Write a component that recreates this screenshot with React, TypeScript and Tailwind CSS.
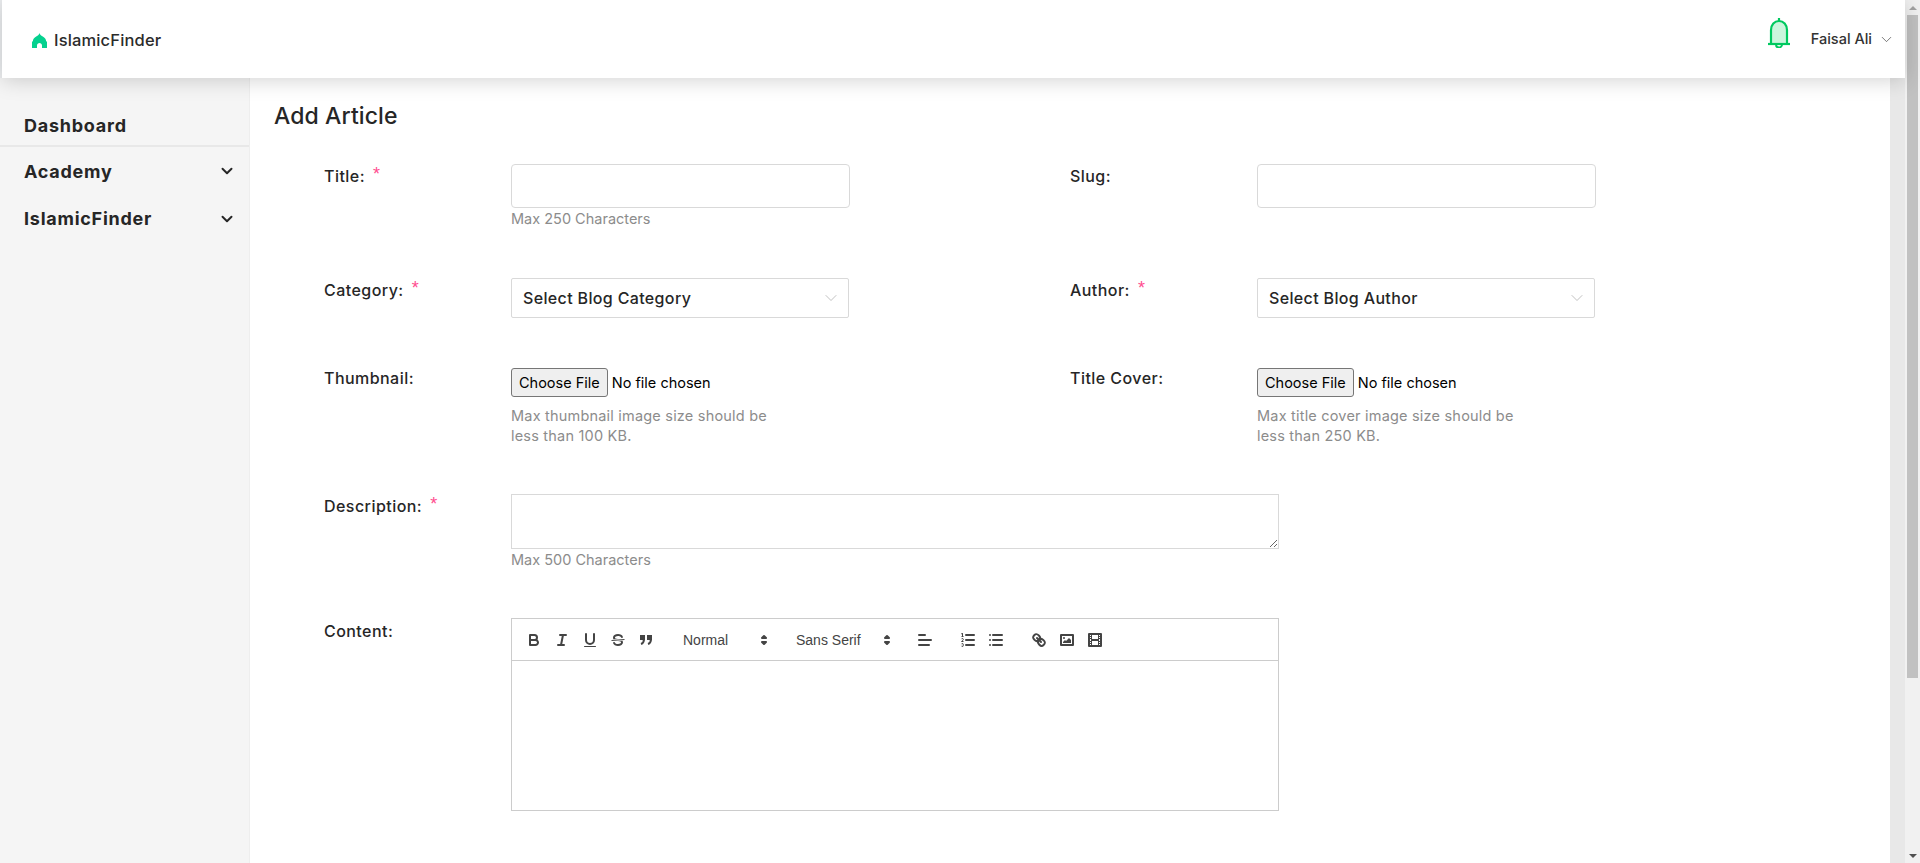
import { ReactNode } from 'react'
import { ChevronDown } from 'lucide-react'

const sans = 'font-["Inter","Open_Sans",sans-serif]'

function Label({ text, required, className = '' }: { text: string; required?: boolean; className?: string }) {
  return (
    <div className={`w-[187px] shrink-0 flex items-start text-[16px] tracking-[0.45px] leading-6 font-[450] text-[#262626] ${className}`}>
      <span>{text}:</span>
      {required && <span className="ml-[8px] -mt-[2px] text-[18px] text-[#ff4d8f] font-['Liberation_Sans',sans-serif]">*</span>}
    </div>
  )
}

function Field({ label, required, labelClass, children }: { label: string; required?: boolean; labelClass?: string; children: ReactNode }) {
  return (
    <div className="flex w-[746px] shrink-0">
      <Label text={label} required={required} className={labelClass} />
      <div>{children}</div>
    </div>
  )
}

function Hint({ children }: { children: ReactNode }) {
  return <div className="text-[14.5px] leading-5 pt-px text-[#8c8c8c]">{children}</div>
}

function SelectBox({ text }: { text: string }) {
  return (
    <div className="w-[338px] h-10 border border-[#d9d9d9] rounded-[2px] flex items-center justify-between pl-[11px] pr-[7px] text-[16px] tracking-[0.35px] font-[450] text-[#262626]">
      <span>{text}</span>
      <ChevronDown size={20} strokeWidth={1} className="text-[#b5b5b5]" />
    </div>
  )
}

function FileField() {
  return <input type="file" className="block w-[260px] h-[29px] text-[14.5px] font-normal text-black file:h-[29px] file:px-[7px] file:mr-1 file:border file:border-[#767676] file:rounded-[3px] file:bg-[#efefef]" />
}

const strokeCls = 'fill-none stroke-[#444] stroke-2 [stroke-linecap:round] [stroke-linejoin:round]'

function QlBtn({ children }: { children: ReactNode }) {
  return (
    <span className="w-7 h-6 px-[5px] py-[3px] shrink-0 block">
      <svg viewBox="0 0 18 18" className="w-[18px] h-[18px]">{children}</svg>
    </span>
  )
}

function Picker({ text, width }: { text: string; width: string }) {
  return (
    <span className={`relative h-6 shrink-0 mr-[15px] pl-2 flex items-center text-sm text-[#444] font-['Liberation_Sans',sans-serif] ${width}`}>
      {text}
      <svg viewBox="0 0 18 18" className="absolute right-0 top-[3px] w-[18px] h-[18px]">
        <polygon className={strokeCls} points="7 11 9 13 11 11 7 11" />
        <polygon className={strokeCls} points="7 7 9 5 11 7 7 7" />
      </svg>
    </span>
  )
}

function Toolbar() {
  return (
    <div className="h-[42px] p-2 flex items-center border-b border-[#ccc]">
      <QlBtn>
        <path className={strokeCls} d="M5,4H9.5A2.5,2.5,0,0,1,12,6.5v0A2.5,2.5,0,0,1,9.5,9H5A0,0,0,0,1,5,9V4A0,0,0,0,1,5,4Z" />
        <path className={strokeCls} d="M5,9h5.5A2.5,2.5,0,0,1,13,11.5v0A2.5,2.5,0,0,1,10.5,14H5a0,0,0,0,1,0,0V9A0,0,0,0,1,5,9Z" />
      </QlBtn>
      <QlBtn>
        <line className={strokeCls} x1="7" x2="13" y1="4" y2="4" />
        <line className={strokeCls} x1="5" x2="11" y1="14" y2="14" />
        <line className={strokeCls} x1="8" x2="10" y1="14" y2="4" />
      </QlBtn>
      <QlBtn>
        <path className={strokeCls} d="M5,3V9a4.012,4.012,0,0,0,4,4H9a4.012,4.012,0,0,0,4-4V3" />
        <rect className="fill-[#444]" height="1" rx=".5" ry=".5" width="12" x="3" y="15" />
      </QlBtn>
      <QlBtn>
        <line className="stroke-[#444] stroke-1" x1="15.5" x2="2.5" y1="8.5" y2="9.5" />
        <path className="fill-[#444]" d="M9.007,8C6.542,7.791,6,7.519,6,6.5,6,5.792,7.283,5,9,5c1.571,0,2.765.679,2.969,1.309a1,1,0,0,0,1.9-.617C13.356,4.106,11.354,3,9,3,6.2,3,4,4.538,4,6.5a3.2,3.2,0,0,0,.5,1.843Z" />
        <path className="fill-[#444]" d="M8.984,10C11.457,10.208,12,10.479,12,11.5c0,.708-1.283,1.5-3,1.5-1.571,0-2.765-.679-2.969-1.309a1,1,0,1,0-1.9.617C4.644,13.894,6.646,15,9,15c2.8,0,5-1.538,5-3.5a3.2,3.2,0,0,0-.5-1.843Z" />
      </QlBtn>
      <span className="mr-[15px] block">
        <QlBtn>
          <rect className="fill-[#444] stroke-[#444] stroke-2" height="3" width="3" x="4" y="5" />
          <rect className="fill-[#444] stroke-[#444] stroke-2" height="3" width="3" x="11" y="5" />
          <path className="fill-none stroke-[#444] stroke-2" d="M7,8c0,4.031-3,5-3,5" />
          <path className="fill-none stroke-[#444] stroke-2" d="M14,8c0,4.031-3,5-3,5" />
        </QlBtn>
      </span>
      <Picker text="Normal" width="w-[98px]" />
      <Picker text="Sans Serif" width="w-[108px]" />
      <span className="mr-[15px] block">
        <QlBtn>
          <line className={strokeCls} x1="3" x2="15" y1="9" y2="9" />
          <line className={strokeCls} x1="3" x2="13" y1="14" y2="14" />
          <line className={strokeCls} x1="3" x2="9" y1="4" y2="4" />
        </QlBtn>
      </span>
      <QlBtn>
        <line className={strokeCls} x1="7" x2="15" y1="4" y2="4" />
        <line className={strokeCls} x1="7" x2="15" y1="9" y2="9" />
        <line className={strokeCls} x1="7" x2="15" y1="14" y2="14" />
        <line className="stroke-[#444] stroke-1" x1="2.5" x2="4.5" y1="5.5" y2="5.5" />
        <path className="fill-[#444]" d="M3.5,6A0.5,0.5,0,0,1,3,5.5V3.085l-0.276.138A0.5,0.5,0,0,1,2.053,3c-0.124-.247-0.023-0.324.224-0.447l1-.5A0.5,0.5,0,0,1,4,2.5v3A0.5,0.5,0,0,1,3.5,6Z" />
        <path className="fill-none stroke-[#444] stroke-1" d="M4.5,10.5h-2c0-.234,1.85-1.076,1.85-2.234A0.959,0.959,0,0,0,2.5,8.156" />
        <path className="fill-none stroke-[#444] stroke-1" d="M2.5,14.846a0.959,0.959,0,0,0,1.85-.109A0.7,0.7,0,0,0,3.75,14a0.688,0.688,0,0,0,.6-0.736,0.959,0.959,0,0,0-1.85-.109" />
      </QlBtn>
      <span className="mr-[15px] block">
        <QlBtn>
          <line className={strokeCls} x1="6" x2="15" y1="4" y2="4" />
          <line className={strokeCls} x1="6" x2="15" y1="9" y2="9" />
          <line className={strokeCls} x1="6" x2="15" y1="14" y2="14" />
          <line className={strokeCls} x1="3" x2="3" y1="4" y2="4" />
          <line className={strokeCls} x1="3" x2="3" y1="9" y2="9" />
          <line className={strokeCls} x1="3" x2="3" y1="14" y2="14" />
        </QlBtn>
      </span>
      <QlBtn>
        <line className={strokeCls} x1="7" x2="11" y1="7" y2="11" />
        <path className={strokeCls} d="M8.9,4.577a3.476,3.476,0,0,1,.36,4.679A3.476,3.476,0,0,1,4.577,8.9C3.185,7.5,2.035,6.4,4.217,4.217S7.5,3.185,8.9,4.577Z" />
        <path className={strokeCls} d="M13.423,9.1a3.476,3.476,0,0,0-4.679-.36,3.476,3.476,0,0,0,.36,4.679c1.392,1.392,2.5,2.542,4.679.36S14.815,10.5,13.423,9.1Z" />
      </QlBtn>
      <QlBtn>
        <rect className={strokeCls} height="10" width="12" x="3" y="4" />
        <circle className="fill-[#444]" cx="6" cy="7" r="1" />
        <polyline className="fill-[#444]" points="5 12 5 11 7 9 8 10 11 7 13 9 13 12 5 12" />
      </QlBtn>
      <QlBtn>
        <rect className={strokeCls} height="12" width="12" x="3" y="3" />
        <rect className="fill-[#444]" height="12" width="1" x="5" y="3" />
        <rect className="fill-[#444]" height="12" width="1" x="12" y="3" />
        <rect className="fill-[#444]" height="2" width="8" x="5" y="8" />
        <rect className="fill-[#444]" height="1" width="3" x="3" y="5" />
        <rect className="fill-[#444]" height="1" width="3" x="3" y="7" />
        <rect className="fill-[#444]" height="1" width="3" x="3" y="10" />
        <rect className="fill-[#444]" height="1" width="3" x="3" y="12" />
        <rect className="fill-[#444]" height="1" width="3" x="12" y="5" />
        <rect className="fill-[#444]" height="1" width="3" x="12" y="7" />
        <rect className="fill-[#444]" height="1" width="3" x="12" y="10" />
        <rect className="fill-[#444]" height="1" width="3" x="12" y="12" />
      </QlBtn>
    </div>
  )
}

// the browser's own scrollbar doesn't show in the photo, so it is drawn
function ScrollBar() {
  return (
    <div className="w-[15px] shrink-0 bg-[#f1f1f1] flex flex-col items-center">
      <div className="h-[15px] w-full flex items-center justify-center">
        <div className="w-0 h-0 border-x-[4px] border-x-transparent border-b-[4px] border-b-[#a3a3a3]" />
      </div>
      <div className="w-[11px] h-[663px] bg-[#c1c1c1]" />
      <div className="mt-auto h-[15px] w-full flex items-center justify-center">
        <div className="w-0 h-0 border-x-[4px] border-x-transparent border-t-[4px] border-t-[#505050]" />
      </div>
    </div>
  )
}

export default function App() {
  return (
    <div className={`${sans} h-[863px] overflow-hidden flex bg-[#eceef0] text-[#262626]`}>
      <div className="flex-1 min-w-0 flex flex-col">
        {/* Top bar */}
        <header className="relative z-10 ml-[2px] h-[78px] shrink-0 bg-white shadow-[0_2px_20px_rgba(0,0,0,0.18)] flex items-center pl-[30px] pr-[10px]">
          <svg viewBox="0 0 15 15" className="w-[15px] h-[15px] mr-[7px] mt-[3px]">
            <path fill="#05d18f" d="M7.5 0 C7.8 1.6 9 2.6 10.8 3.6 C12.8 4.7 14 6.2 14.2 8.5 L15 8.5 V15 H10 V12.5 C10 11 8.8 10 7.5 10 C6.2 10 5 11 5 12.5 V15 H0 V8.5 L.8 8.5 C1 6.2 2.2 4.7 4.2 3.6 C6 2.6 7.2 1.6 7.5 0 Z" />
          </svg>
          <span className="text-[16.5px] tracking-[0.15px] font-[450] text-[#2b2b2b] mt-[3px]">IslamicFinder</span>
          <div className="ml-auto flex items-center">
            <svg viewBox="0 0 22 30" className="w-[22px] h-[30px] mr-[21px] -mt-[12px]">
              <path d="M11 0.5 V3" stroke="#00c95f" strokeWidth="2.2" strokeLinecap="round" />
              <path d="M3 26 V12 C3 6.5 6.5 3 11 3 C15.5 3 19 6.5 19 12 V26 Z" fill="#cbf6dd" stroke="#00c95f" strokeWidth="2.2" />
              <line x1="0" x2="22" y1="26" y2="26" stroke="#00c95f" strokeWidth="2.2" />
              <path d="M8 26.5 A3 3 0 0 0 14 26.5" fill="none" stroke="#00c95f" strokeWidth="2" />
            </svg>
            <span className="text-[14.5px] font-[450] text-[#333]">Faisal Ali</span>
            <ChevronDown size={17} strokeWidth={1} className="ml-[6px] text-[#444]" />
          </div>
        </header>

        <div className="flex flex-1">
          {/* Sidebar */}
          <aside className="w-[250px] shrink-0 bg-[#f5f5f5] border-r border-[#eeeeee] pt-[27px] text-[18px] tracking-[0.75px] font-[650] text-[#262626]">
            <div className="h-[42px] pl-6 flex items-center border-b-2 border-[#e8e8e8]">Dashboard</div>
            <div className="h-[48px] pl-6 pr-[13px] flex items-center justify-between">
              Academy
              <ChevronDown size={18} strokeWidth={2.6} />
            </div>
            <div className="h-[47px] pl-6 pr-[13px] flex items-center justify-between">
              IslamicFinder
              <ChevronDown size={18} strokeWidth={2.6} />
            </div>
          </aside>

          {/* Main */}
          <main className="flex-1 bg-white pt-[22px] pl-6">
            <h1 className="text-[23px] tracking-[0.1px] leading-[33px] font-medium text-[#262626] mb-[31px]">Add Article</h1>
            <div className="pl-[50px]">
              <div className="flex h-[114px]">
                <Field label="Title" required>
                  <input className="block w-[339px] h-[44px] border border-[#d9d9d9] rounded-[4px] outline-none" />
                  <Hint>Max 250 Characters</Hint>
                </Field>
                <Field label="Slug">
                  <input className="block w-[339px] h-[44px] border border-[#d9d9d9] rounded-[4px] outline-none" />
                </Field>
              </div>
              <div className="flex h-[90px]">
                <Field label="Category" required>
                  <SelectBox text="Select Blog Category" />
                </Field>
                <Field label="Author" required>
                  <SelectBox text="Select Blog Author" />
                </Field>
              </div>
              <div className="flex h-[126px]">
                <Field label="Thumbnail" labelClass="-mt-[2px]">
                  <FileField />
                  <div className="w-[270px] mt-[8px] tracking-[0.2px]"><Hint>Max thumbnail image size should be less than 100 KB.</Hint></div>
                </Field>
                <Field label="Title Cover" labelClass="-mt-[2px]">
                  <FileField />
                  <div className="w-[270px] mt-[8px] tracking-[0.2px]"><Hint>Max title cover image size should be less than 250 KB.</Hint></div>
                </Field>
              </div>
              <div className="flex h-[124px]">
                <Field label="Description" required>
                  <textarea className="block w-[768px] h-[55px] border border-[#d9d9d9] outline-none" />
                  <Hint>Max 500 Characters</Hint>
                </Field>
              </div>
              <div className="flex">
                <Field label="Content" labelClass="mt-px">
                  <div className="w-[768px] h-[193px] border border-[#ccc]">
                    <Toolbar />
                  </div>
                </Field>
              </div>
            </div>
          </main>
          <div className="w-[15px] shrink-0 bg-[#e8e8e8]" />
        </div>
      </div>
      <ScrollBar />
    </div>
  )
}
